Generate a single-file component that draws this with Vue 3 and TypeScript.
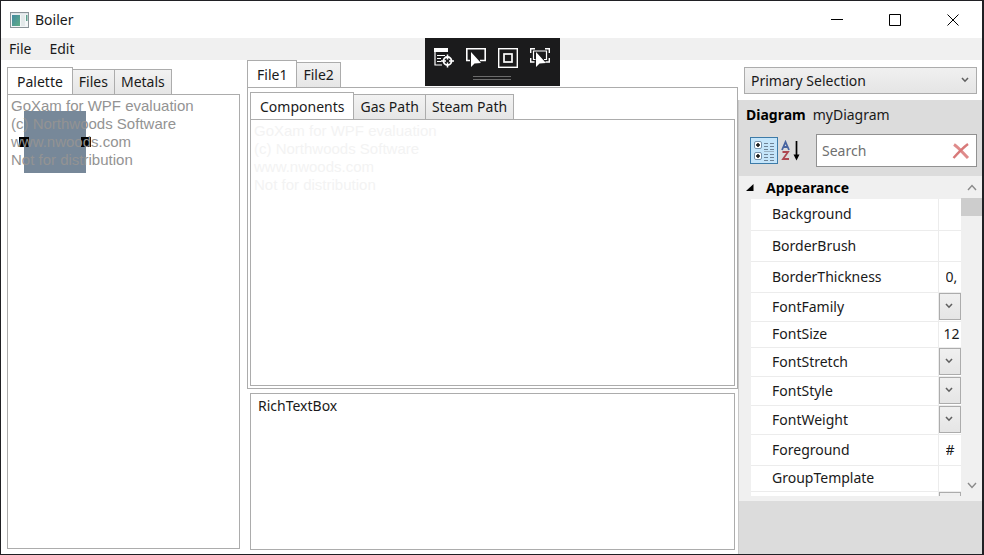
<script setup lang="ts">
import { ref } from 'vue'

interface Prop {
  name: string
  kind: 'text' | 'select'
  value: string
  size: 'tall' | 'mid' | 'short'
}

const paletteTabs = ['Palette', 'Files', 'Metals']
const fileTabs = ['File1', 'File2']
const viewTabs = ['Components', 'Gas Path', 'Steam Path']
const paletteTab = ref('Palette')
const fileTab = ref('File1')
const viewTab = ref('Components')
const search = ref('')
const notes = ref('RichTextBox')
const open = ref(true)

const watermark = [
  'GoXam for WPF evaluation',
  '(c) Northwoods Software',
  'www.nwoods.com',
  'Not for distribution',
]

const props: Prop[] = [
  { name: 'Background', kind: 'text', value: '', size: 'tall' },
  { name: 'BorderBrush', kind: 'text', value: '', size: 'tall' },
  { name: 'BorderThickness', kind: 'text', value: '0,', size: 'tall' },
  { name: 'FontFamily', kind: 'select', value: '', size: 'mid' },
  { name: 'FontSize', kind: 'text', value: '12', size: 'short' },
  { name: 'FontStretch', kind: 'select', value: '', size: 'mid' },
  { name: 'FontStyle', kind: 'select', value: '', size: 'mid' },
  { name: 'FontWeight', kind: 'select', value: '', size: 'mid' },
  { name: 'Foreground', kind: 'text', value: '#', size: 'tall' },
  { name: 'GroupTemplate', kind: 'text', value: '', size: 'short' },
  { name: '', kind: 'select', value: '', size: 'mid' },
]
</script>

<template>
  <div class="window">
    <header class="titlebar">
      <svg class="app-icon" width="19" height="16" viewBox="0 0 19 16">
        <defs>
          <linearGradient id="appfill" x1="0" y1="0" x2="1" y2="1">
            <stop offset="0" stop-color="#4389a0" />
            <stop offset="1" stop-color="#5fae86" />
          </linearGradient>
        </defs>
        <rect x="0.5" y="0.5" width="18" height="15" fill="#f4f7f8" stroke="#8b9499" />
        <rect x="1" y="1" width="17" height="1.5" fill="#dfe5e8" />
        <rect x="2" y="3" width="8" height="11" fill="url(#appfill)" />
        <rect x="11" y="3" width="4" height="11" fill="#e3e9ea" />
        <rect x="16" y="3" width="1.5" height="6" fill="#5da08d" />
      </svg>
      <h1 class="title">Boiler</h1>
      <div class="caption-buttons">
        <button type="button" aria-label="Minimize"><svg width="12" height="12" viewBox="0 0 12 12"><path d="M0 5.5H12" /></svg></button>
        <button type="button" aria-label="Maximize"><svg width="12" height="12" viewBox="0 0 12 12"><path d="M.5 .5H11.5V11.5H.5Z" /></svg></button>
        <button type="button" aria-label="Close"><svg width="12" height="12" viewBox="0 0 12 12"><path d="M.5 .5L11.5 11.5M11.5 .5L.5 11.5" /></svg></button>
      </div>
    </header>

    <nav class="menubar">
      <button type="button">File</button>
      <button type="button">Edit</button>
    </nav>

    <div class="debug-bar">
      <div class="debug-tools">
        <button type="button" aria-label="Go to live visual tree">
          <svg width="20" height="20" viewBox="0 0 20 20">
            <path d="M0 0H14V4H0Z" fill="#fff" stroke="none" />
            <path d="M1 4V17H8M3 7.500H11M3 10.500H7M3 13.500H7" stroke-width="1.200" />
            <circle cx="13.500" cy="13" r="4" stroke-width="1.800" />
            <path d="M13.500 6.500V11.500M13.500 14.500V19.500M7 13H12M15 13H20" stroke-width="1.500" />
          </svg>
        </button>
        <button type="button" aria-label="Select element">
          <svg width="20" height="20" viewBox="0 0 20 20">
            <path d="M4 12.500H.800V.800H19.200V12.500H14" stroke-width="1.600" />
            <path d="M5 4V19L8.500 15.500L15 15Z" fill="#fff" stroke="none" />
          </svg>
        </button>
        <button type="button" aria-label="Display layout adorners">
          <svg width="20" height="20" viewBox="0 0 20 20">
            <rect x="0.700" y="0.700" width="18.600" height="18.600" stroke-width="1.400" />
            <rect x="6" y="6" width="8" height="8" stroke-width="1.700" />
          </svg>
        </button>
        <button type="button" aria-label="Track focused element">
          <svg width="20" height="20" viewBox="0 0 20 20">
            <path d="M.700 5V.700H5M15 .700H19.300V5M19.300 10V14H15.500M4.500 14H.700V10" stroke-width="1.400" />
            <path d="M5.500 11.500H3.500V3H16.500V11.500H14" stroke-width="1.200" />
            <path d="M6 4V19L9.500 15.500L16 15Z" fill="#fff" stroke="none" />
          </svg>
        </button>
      </div>
      <div class="grip"></div>
    </div>

    <main class="body">
      <section class="palette">
        <div class="tabs" role="tablist">
          <button v-for="t in paletteTabs" :key="t" type="button" role="tab" :aria-selected="t === paletteTab" :class="{ active: t === paletteTab }" @click="paletteTab = t">{{ t }}</button>
        </div>
        <div class="panel canvas">
          <div class="node"><i class="port left"></i><i class="port right"></i></div>
          <p class="watermark"><span v-for="w in watermark" :key="w">{{ w }}</span></p>
        </div>
      </section>

      <section class="center">
        <div class="files">
          <div class="tabs" role="tablist">
            <button v-for="t in fileTabs" :key="t" type="button" role="tab" :aria-selected="t === fileTab" :class="{ active: t === fileTab }" @click="fileTab = t">{{ t }}</button>
          </div>
          <div class="panel outer">
            <div class="tabs" role="tablist">
              <button v-for="t in viewTabs" :key="t" type="button" role="tab" :aria-selected="t === viewTab" :class="{ active: t === viewTab }" @click="viewTab = t">{{ t }}</button>
            </div>
            <div class="panel canvas">
              <p class="watermark faint"><span v-for="w in watermark" :key="w">{{ w }}</span></p>
            </div>
          </div>
        </div>
        <textarea v-model="notes" class="rich" aria-label="Rich text" spellcheck="false"></textarea>
      </section>

      <aside class="side">
        <div class="picker">
          <select aria-label="Selection"><option>Primary Selection</option></select>
          <svg class="chev" width="8" height="6" viewBox="0 0 8 6"><path d="M1 1L4 4.200L7 1" /></svg>
        </div>
        <div class="inspector">
          <div class="subject"><strong>Diagram</strong><span>myDiagram</span></div>
          <div class="tools">
            <button type="button" class="mode on" aria-label="Categorized">
              <svg width="22" height="22" viewBox="0 0 22 22">
                <g fill="#fff" stroke="#7893ad"><rect x="1.500" y="1.500" width="7" height="7" rx="1.500" /><rect x="1.500" y="12.500" width="7" height="7" rx="1.500" /></g>
                <path d="M3 5H7M5 3V7M3 16H7M5 14V18" stroke="#111" stroke-width="1.500" />
                <path d="M11 3.500H15M17 3.500H21M11 6.500H15M17 6.500H21M11 9.500H15M17 9.500H21M11 14.500H15M17 14.500H21M11 17.500H15M17 17.500H21M11 20.500H15M17 20.500H21" stroke="#6f8396" />
                <path d="M11 11.500H21" stroke="#9db3c4" />
              </svg>
            </button>
            <button type="button" class="mode" aria-label="Alphabetical">
              <svg width="20" height="22" viewBox="0 0 20 22">
                <path d="M1 10L4.500 2L8 10M2.500 7H6.500" stroke="#4864a0" stroke-width="1.800" />
                <path d="M1.500 12H7L2 19H8" stroke="#ae4750" stroke-width="1.800" />
                <path d="M15.500 1V16" stroke="#000" stroke-width="1.700" />
                <path d="M12.500 14.500H18.500L15.500 20.500Z" fill="#000" />
              </svg>
            </button>
            <div class="search">
              <input v-model="search" type="text" placeholder="Search" aria-label="Search" />
              <button type="button" aria-label="Clear search" @click="search = ''">
                <svg width="18" height="18" viewBox="0 0 18 18">
                  <path d="M2 2.500C6 5 11 11 16 16" stroke="#df8b8b" stroke-width="3" />
                  <path d="M16 2C12 5 6 11 1.500 16" stroke="#d87979" stroke-width="2.400" />
                </svg>
              </button>
            </div>
          </div>
          <div class="grid">
            <div class="list">
              <button type="button" class="category" :aria-expanded="open" @click="open = !open">
                <svg width="8" height="8" viewBox="0 0 8 8"><path d="M7.500 0V7H0Z" /></svg>
                Appearance
              </button>
              <table v-if="open">
                <tbody>
                  <tr v-for="(p, i) in props" :key="i" :class="p.size">
                    <th scope="row"><label :for="'prop' + i">{{ p.name }}</label></th>
                    <td>
                      <div v-if="p.kind === 'select'" class="drop">
                        <select :id="'prop' + i"><option></option></select>
                        <svg class="chev" width="8" height="6" viewBox="0 0 8 6"><path d="M1 1L4 4.200L7 1" /></svg>
                      </div>
                      <input v-else :id="'prop' + i" type="text" :value="p.value" />
                    </td>
                  </tr>
                </tbody>
              </table>
            </div>
            <div class="scroll">
              <button type="button" aria-label="Scroll up"><svg width="10" height="7" viewBox="0 0 10 7"><path d="M1 6L5 1.500L9 6" /></svg></button>
              <div class="thumb"></div>
              <button type="button" aria-label="Scroll down"><svg width="10" height="7" viewBox="0 0 10 7"><path d="M1 1L5 5.500L9 1" /></svg></button>
            </div>
          </div>
          <div class="description"></div>
        </div>
      </aside>
    </main>
  </div>
</template>

<style>
body {
  margin: 0;
}
</style>

<style scoped>
* {
  box-sizing: border-box;
}
.window {
  position: relative;
  display: flex;
  flex-direction: column;
  height: 100vh;
  background: #fff;
  border: 1px solid #202024;
  border-right-width: 2px;
  color: #1a1a1a;
  font: 14px/20px "Noto Sans", "Open Sans", sans-serif;
}
button,
input,
select,
textarea {
  margin: 0;
  padding: 0;
  border: 0;
  border-radius: 0;
  background: none;
  color: inherit;
  font: inherit;
  outline: none;
}
svg {
  display: block;
  fill: none;
  flex: none;
}
.titlebar {
  display: flex;
  align-items: center;
  height: 37px;
  flex: none;
  padding-left: 9px;
}
.title {
  margin: 0 0 0 6px;
  font-size: 14px;
  font-weight: 400;
}
.caption-buttons {
  display: flex;
  margin-left: auto;
  align-self: stretch;
}
.caption-buttons button {
  display: grid;
  place-items: center;
  width: 58px;
}
.caption-buttons svg {
  stroke: #000;
}
.menubar {
  display: flex;
  align-items: center;
  gap: 18px;
  height: 22px;
  flex: none;
  padding-left: 8px;
  background: #f0f0f0;
}
.debug-bar {
  position: absolute;
  top: 37px;
  left: 50%;
  width: 135px;
  height: 48px;
  margin-left: -67px;
  padding: 10px 9px 0;
  background: #1b1b1c;
}
.debug-tools {
  display: flex;
  justify-content: space-between;
}
.debug-tools svg {
  stroke: #fff;
}
.grip {
  width: 38px;
  height: 4px;
  margin: 8px auto 0;
  border: solid #6b6b6b;
  border-width: 1px 0;
}
.body {
  display: grid;
  grid-template-columns: 233fr 498fr 244fr;
  flex: 1;
  min-height: 0;
  padding-left: 6px;
}
.palette {
  display: flex;
  flex-direction: column;
  min-width: 0;
  padding: 7px 0 5px;
}
.tabs {
  display: flex;
  align-items: flex-end;
  flex: none;
}
.tabs button {
  height: 25px;
  padding: 0 6px;
  border: 1px solid #acacac;
  border-bottom: 0;
  background: linear-gradient(#f2f2f2, #e6e6e6);
  white-space: nowrap;
}
.tabs button + button {
  margin-left: -1px;
}
.tabs button.active {
  position: relative;
  height: 28px;
  margin-bottom: -1px;
  padding: 0 9px;
  background: #fff;
}
.panel {
  position: relative;
  flex: 1;
  min-height: 0;
  border: 1px solid #acacac;
}
.canvas {
  padding: 2px 3px;
}
.watermark {
  position: relative;
  margin: 0;
  color: #939393;
  font: 15px/18px "Liberation Sans", Arial, sans-serif;
}
.watermark span {
  display: block;
}
.watermark.faint {
  color: #f3f3f3;
}
.node {
  position: absolute;
  left: 16px;
  top: 16px;
  width: 62px;
  height: 62px;
  background: #778899;
}
.port {
  position: absolute;
  top: 26px;
  width: 10px;
  height: 10px;
  background: #000;
}
.port.left {
  left: -5px;
}
.port.right {
  right: -5px;
}
.center {
  display: grid;
  grid-template-rows: 328fr 157fr;
  gap: 4px;
  min-width: 0;
  margin-left: 7px;
  padding-bottom: 4px;
}
.files,
.outer {
  display: flex;
  flex-direction: column;
  min-height: 0;
}
.outer {
  padding: 4px 2px 2px;
}
.rich {
  display: block;
  margin: 0 3px;
  padding: 2px 7px;
  border: 1px solid #acacac;
  resize: none;
}
.side {
  display: flex;
  flex-direction: column;
  min-width: 0;
  min-height: 0;
}
.picker {
  position: relative;
  margin: 7px 5px 6px 6px;
}
.picker select {
  display: block;
  width: 100%;
  height: 27px;
  padding: 0 6px;
  border: 1px solid #acacac;
  background: linear-gradient(#f0f0f0, #e5e5e5);
  appearance: none;
}
.chev {
  position: absolute;
  stroke: #606060;
  stroke-width: 1.6;
  pointer-events: none;
}
.picker .chev {
  top: 10px;
  right: 8px;
}
.inspector {
  display: flex;
  flex-direction: column;
  flex: 1;
  min-height: 0;
  border-left: 1px solid #c8c8c8;
  background: #dcdcdc;
}
.subject {
  display: flex;
  gap: 7px;
  padding: 5px 7px 0;
}
.subject strong,
.category {
  color: #000;
  font-weight: 700;
}
.tools {
  display: flex;
  align-items: center;
  padding: 9px 5px 9px 11px;
}
.mode {
  display: grid;
  place-items: center;
  width: 26px;
  height: 27px;
  flex: none;
}
.mode.on {
  width: 28px;
  border: 1px solid #3d7ba8;
  background: #c5e5fa;
}
.search {
  display: flex;
  align-items: center;
  flex: 1;
  min-width: 0;
  height: 33px;
  margin-left: 12px;
  padding: 0 6px 0 5px;
  border: 1px solid #919191;
  background: #fff;
}
.search input {
  flex: 1;
  min-width: 0;
}
.search input::placeholder {
  color: #707070;
  opacity: 1;
}
.grid {
  display: flex;
  flex: 1;
  min-height: 0;
  background: #f0f0f0;
}
.list {
  flex: 1;
  min-width: 0;
  overflow: hidden;
}
.category {
  display: flex;
  align-items: center;
  gap: 12px;
  height: 23px;
  padding-left: 7px;
}
.category svg {
  fill: #000;
}
table {
  width: calc(100% - 12px);
  margin-left: 12px;
  border-collapse: collapse;
  table-layout: fixed;
  background: #fff;
}
tr.tall {
  height: 31px;
}
tr.mid {
  height: 29px;
}
tr.short {
  height: 26px;
}
th,
td {
  padding: 0;
  border-bottom: 1px solid #ececec;
}
th {
  padding-left: 21px;
  font-weight: 400;
  text-align: left;
}
td {
  width: 23px;
  border-left: 1px solid #ececec;
}
td input {
  display: block;
  width: 100%;
  padding-left: 7px;
}
tr.short input {
  padding-left: 5px;
}
.drop {
  position: relative;
}
.drop select {
  display: block;
  width: 100%;
  height: 27px;
  border: 1px solid #acacac;
  background: linear-gradient(#f0f0f0, #e5e5e5);
  appearance: none;
}
.drop .chev {
  top: 10px;
  left: 6px;
}
.scroll {
  display: flex;
  flex-direction: column;
  width: 21px;
}
.scroll button {
  display: grid;
  place-items: center;
  height: 22px;
}
.scroll button:last-child {
  margin-top: auto;
}
.scroll svg {
  stroke: #8a8a8a;
  stroke-width: 1.4;
}
.thumb {
  height: 18px;
  background: #cdcdcd;
}
.description {
  height: 58px;
  flex: none;
  border-top: 5px solid #f0f0f0;
}
</style>
